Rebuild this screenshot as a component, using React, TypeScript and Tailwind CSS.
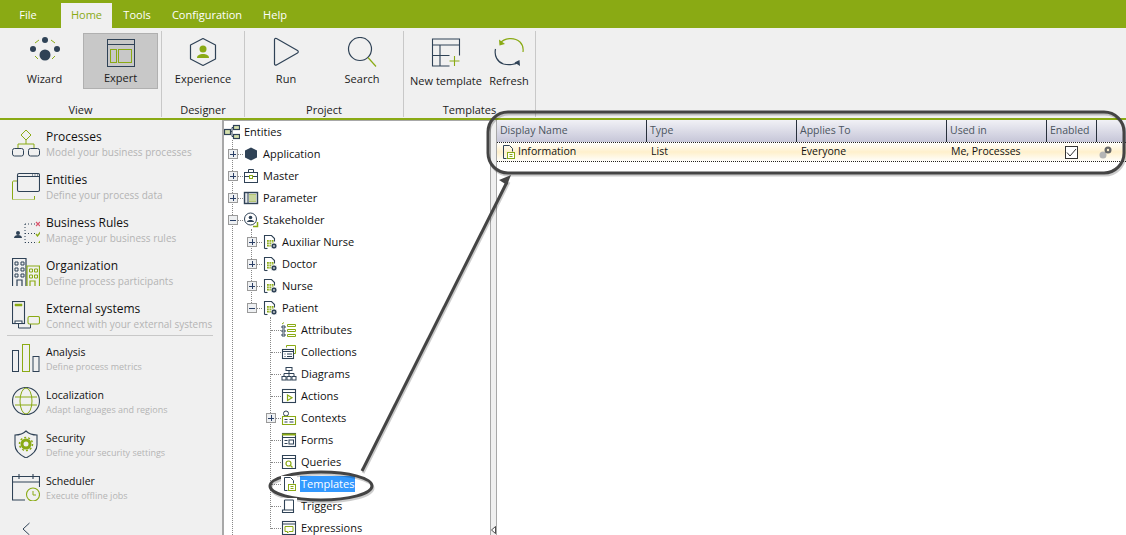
import type { ReactNode } from 'react'

const DARK = '#2f4256'
const GREEN = '#8aaa14'

function Ico({ size, vb, children }: { size: number; vb?: string; children: ReactNode }) {
  return (
    <svg width={size} height={size} viewBox={vb ?? `0 0 ${size} ${size}`} fill="none" stroke={DARK} strokeWidth="1" className="shrink-0">
      {children}
    </svg>
  )
}

/* ---- ribbon icons ---- */
const WizardIcon = () => (
  <Ico size={36}>
    <circle cx="18" cy="6" r="3" fill={DARK} stroke="none" />
    <circle cx="6" cy="15" r="3" fill={DARK} stroke="none" />
    <circle cx="30" cy="15" r="3" fill={DARK} stroke="none" />
    <circle cx="18" cy="21" r="5.5" fill={DARK} stroke="none" />
    <path d="M8 9l4-3M24 6l4 3M8 22l3 3M28 22l-3 3" stroke={GREEN} />
  </Ico>
)
const ExpertIcon = () => (
  <Ico size={30}>
    <rect x="1.500" y="1.500" width="27" height="27" />
    <path d="M1.500 6.500h27" />
    <rect x="4.500" y="11.500" width="6" height="13" stroke={GREEN} />
    <rect x="12.500" y="11.500" width="13" height="13" stroke={GREEN} />
  </Ico>
)
const ExperienceIcon = () => (
  <Ico size={30}>
    <path d="M8 2.500h14l6.500 12.500L22 27.500H8L1.500 15z" strokeWidth="1.200" strokeLinejoin="round" transform="rotate(90 15 15)" />
    <circle cx="15" cy="12" r="3.500" fill={GREEN} stroke="none" />
    <path d="M9 21c0-3 3-4 6-4s6 1 6 4z" fill={GREEN} stroke="none" />
  </Ico>
)
const RunIcon = () => (
  <Ico size={30}>
    <path d="M3.500 2.500c0-1 1-1.500 2-1l21 12c1 .6 1 1.800 0 2.400l-21 12c-1 .5-2 0-2-1z" strokeWidth="1.200" />
  </Ico>
)
const SearchIcon = () => (
  <Ico size={30}>
    <circle cx="13" cy="12" r="11.500" strokeWidth="1.200" />
    <path d="M21 20.500l8 9" stroke={GREEN} strokeWidth="1.200" />
  </Ico>
)
const NewTemplateIcon = () => (
  <Ico size={30}>
    <path d="M28.500 18.500V2H1.500v27h17M1.500 8h27M1.500 18.500h17M9 8v21" strokeWidth="1.100" />
    <path d="M23.500 19v10M18.500 24h10" stroke={GREEN} strokeWidth="1.100" />
  </Ico>
)
const RefreshIcon = () => (
  <Ico size={30}>
    <path d="M6 6.500C10 1 20-.5 26 5c3 3 3.500 6.500 3 10" stroke={GREEN} strokeWidth="1.200" />
    <path d="M5 2.500l.5 6 5.500-1.500z" fill={GREEN} stroke="none" />
    <path d="M1.500 12c-1.500 7 2 13 8 15 5.500 1.500 12 .5 15-2" strokeWidth="1.200" />
    <path d="M26 29l-.5-6-5 2.500z" fill={DARK} stroke="none" />
  </Ico>
)

/* ---- side navigation icons ---- */
const navIcons: Record<string, ReactNode> = {
  Processes: (
    <Ico size={28}>
      <path d="M14 1l5 5-5 5-5-5z" stroke={GREEN} />
      <path d="M14 11v4M6 19v-4h16v4" stroke={GREEN} />
      <rect x="0.500" y="19.500" width="11" height="7.500" rx="2" />
      <rect x="16.500" y="19.500" width="11" height="7.500" rx="2" />
    </Ico>
  ),
  Entities: (
    <Ico size={28}>
      <path d="M5 9H1.500c-.5 0-1 .5-1 1v17c0 .5.5 1 1 1h20c.5 0 1-.5 1-1v-3" stroke={GREEN} />
      <rect x="5.500" y="1.500" width="22" height="18" rx="1.500" strokeWidth="1.100" />
      <path d="M5.500 4.500h22" />
      <path d="M20 3h1M22.500 3h1M25 3h1" />
    </Ico>
  ),
  'Business Rules': (
    <Ico size={28}>
      <circle cx="6" cy="18" r="2" fill={DARK} stroke="none" />
      <path d="M2 23c0-2 2-3 4-3s4 1 4 3z" fill={DARK} stroke="none" />
      <path d="M13 9h11M13 18.500h11M13 27.500h11M13 9v18.500" strokeDasharray="1 2" />
      <path d="M24 7l4 4M28 7l-4 4" stroke="#d9536b" strokeWidth="1.200" />
      <path d="M24 19l1.500 2 3-4M24 28l1.500 2 3-4" stroke={GREEN} strokeWidth="1.300" />
    </Ico>
  ),
  Organization: (
    <Ico size={28}>
      <path d="M.5 28V.5h13.500V28M5 28v-6h5v6" strokeWidth="1.200" />
      <path d="M3 4h3v3H3zM9 4h3v3H9zM3 10h3v3H3zM9 10h3v3H9zM3 16h3v3H3zM9 16h3v3H9z" />
      <path d="M15 28V8h12.500v20M18 28v-5h5v5" stroke={GREEN} strokeWidth="1.200" />
      <path d="M17.500 11h3v3h-3zM22.500 11h3v3h-3zM17.500 17h3v3h-3zM22.500 17h3v3h-3z" stroke={GREEN} />
    </Ico>
  ),
  'External systems': (
    <Ico size={28}>
      <rect x="0.500" y="0.500" width="12" height="22" strokeWidth="1.100" />
      <path d="M3 3h7v2H3z" fill={GREEN} stroke={GREEN} strokeWidth="0.500" />
      <rect x="3" y="20" width="7" height="2.500" fill="#fff" />
      <path d="M6.500 23v4h12v-4" />
      <rect x="16" y="15.500" width="11.500" height="7.500" rx="1.500" stroke={GREEN} strokeWidth="1.100" />
    </Ico>
  ),
  Analysis: (
    <Ico size={28}>
      <rect x="0.500" y="6.500" width="6" height="21" />
      <rect x="10.500" y="0.500" width="7" height="27" stroke={GREEN} />
      <rect x="21" y="12.500" width="6" height="15" />
    </Ico>
  ),
  Localization: (
    <Ico size={28}>
      <circle cx="14" cy="14" r="13.500" strokeWidth="1.100" />
      <ellipse cx="14" cy="14" rx="6" ry="13" stroke={GREEN} />
      <path d="M3 10h22M3 18h22" stroke={GREEN} />
    </Ico>
  ),
  Security: (
    <Ico size={28}>
      <path d="M14 1c3 3 8 4 11 4v10c0 6-5 10-11 13C8 25 3 21 3 15V5c3 0 8-1 11-4z" strokeWidth="1.100" />
      <circle cx="14" cy="14" r="4" stroke={GREEN} strokeWidth="3" />
      <circle cx="14" cy="14" r="6.500" stroke={GREEN} strokeWidth="1.500" strokeDasharray="2 2" />
    </Ico>
  ),
  Scheduler: (
    <Ico size={28}>
      <path d="M13 27H.5V3.500h27V14M.5 9h27M7 1v5M21 1v5" strokeWidth="1.100" />
      <circle cx="21" cy="21.500" r="6.500" stroke={GREEN} strokeWidth="1.100" />
      <path d="M21 18v4h3" stroke={GREEN} />
    </Ico>
  ),
}

/* ---- tree icons ---- */
const Doc = ({ children }: { children?: ReactNode }) => (
  <Ico size={16}>
    <path d="M3.500 14.500v-13h6l3 3v3" />
    <path d="M3.500 14.500h3" />
    {children}
  </Ico>
)
const StakeDoc = () => (
  <Ico size={16}>
    <path d="M2.500 14.500v-13h7l3 3v3" strokeWidth="1.100" />
    <path d="M2.500 14.500h3" strokeWidth="1.100" />
    <rect x="5" y="6" width="6.500" height="6.500" fill={GREEN} stroke="none" />
    <path d="M5 8.200h6.500M5 10.400h6.500M7.200 6v6.500M9.400 6v6.500" stroke="#fff" strokeWidth="0.700" />
    <circle cx="12" cy="12" r="3" fill={DARK} stroke="#fff" strokeWidth="0.700" />
    <circle cx="12" cy="12" r="1" fill="#c8ccd0" stroke="none" />
  </Ico>
)
const TemplateDoc = () => (
  <Doc>
    <rect x="7.500" y="8.500" width="7" height="6" stroke={GREEN} fill="#fff" />
    <path d="M9.500 10.500h3M9.500 12.500h3" stroke={GREEN} />
  </Doc>
)

const treeIcons: Record<string, ReactNode> = {
  Entities: (
    <Ico size={16}>
      <rect x="0.500" y="5.500" width="6" height="5" fill={GREEN} fillOpacity="0.35" strokeWidth="1.200" />
      <rect x="9.500" y="1.500" width="6" height="4" fill={GREEN} fillOpacity="0.35" strokeWidth="1.200" />
      <rect x="9.500" y="10.500" width="6" height="4" fill={GREEN} fillOpacity="0.35" strokeWidth="1.200" />
      <path d="M6.500 7.500h1.500M8 3.500v9M8 3.500h1.500M8 12.500h1.500" />
    </Ico>
  ),
  Application: (
    <Ico size={16}>
      <path d="M8 1.500l6 3v7l-6 3-6-3v-7z" fill={DARK} stroke="none" />
    </Ico>
  ),
  Master: (
    <Ico size={16}>
      <rect x="1.500" y="4.500" width="13" height="10" />
      <path d="M5.500 4.500v-3h5v3M1.500 8.500h13" />
      <rect x="6.500" y="7.500" width="3" height="3" stroke={GREEN} fill="#fff" />
    </Ico>
  ),
  Parameter: (
    <Ico size={16}>
      <rect x="1.500" y="2.500" width="13" height="11" fill="#e4e7ea" strokeWidth="1.400" />
      <path d="M5 3v10" strokeWidth="1" />
      <rect x="6" y="4" width="7" height="8" fill={GREEN} fillOpacity="0.55" stroke="none" />
      <path d="M6 6h7M6 8h7M6 10h7" stroke="#fff" strokeWidth="0.600" />
    </Ico>
  ),
  Stakeholder: (
    <Ico size={16}>
      <path d="M10 14.500h4.500V10" stroke={GREEN} strokeWidth="1.500" />
      <circle cx="7.500" cy="7" r="6" />
      <circle cx="7.500" cy="5.500" r="1.800" fill={DARK} stroke="none" />
      <path d="M4 10c0-1.500 2-2 3.500-2s3.500.5 3.500 2z" fill={DARK} stroke="none" />
    </Ico>
  ),
  Attributes: (
    <Ico size={16}>
      <path d="M1 4h3v2H1zM1 8h3v2H1zM1 12h3v2H1z" />
      <path d="M6.500 2.500h8v2h-8zM6.500 7.500h8v2h-8zM6.500 12.500h8v2h-8z" stroke={GREEN} />
      <path d="M1 2l2-1.500" stroke={GREEN} />
    </Ico>
  ),
  Collections: (
    <Ico size={16}>
      <path d="M5.500 3.500v-2h9v8h-2" stroke={GREEN} />
      <rect x="1.500" y="5.500" width="11" height="9" strokeWidth="1.100" />
      <path d="M1.500 7.500h11M3.500 10h1M6 10h5M3.500 12.500h1M6 12.500h5" />
    </Ico>
  ),
  Diagrams: (
    <Ico size={16}>
      <rect x="5" y="1.500" width="6" height="3" />
      <path d="M8 4.500v3M3 10V7.500h10V10M8 7.500V10" />
      <rect x="1" y="10.500" width="4" height="3.500" />
      <rect x="6" y="10.500" width="4" height="3.500" />
      <rect x="11" y="10.500" width="4" height="3.500" />
    </Ico>
  ),
  Actions: (
    <Ico size={16}>
      <rect x="1.500" y="1.500" width="13" height="13" strokeWidth="1.100" />
      <path d="M1.500 4.500h13" />
      <path d="M6.500 7v5.500L11 9.700z" stroke={GREEN} strokeWidth="1.200" />
    </Ico>
  ),
  Contexts: (
    <Ico size={16}>
      <circle cx="5" cy="3.500" r="2.500" />
      <path d="M1.500 6.500h13v8h-13z" stroke={GREEN} strokeWidth="1.100" />
      <path d="M3.500 9.500h3M8.500 9.500h4M3.500 12h3M8.500 12h4" />
    </Ico>
  ),
  Forms: (
    <Ico size={16}>
      <rect x="1.500" y="1.500" width="13" height="13" strokeWidth="1.100" />
      <path d="M1 2.500h14" stroke={GREEN} strokeWidth="2" />
      <path d="M1.500 5.500h13M3.500 8.500h3M3.500 11.500h3" />
      <rect x="8" y="8" width="4.500" height="4" />
    </Ico>
  ),
  Queries: (
    <Ico size={16}>
      <path d="M1.500 1.500h13v13h-13z" strokeWidth="1.100" />
      <path d="M1.500 4.500h13" />
      <circle cx="7.500" cy="9.500" r="2.500" stroke={GREEN} strokeWidth="1.200" />
      <path d="M9.500 11.500l2 2" stroke={GREEN} strokeWidth="1.200" />
    </Ico>
  ),
  Templates: <TemplateDoc />,
  Triggers: (
    <Ico size={16}>
      <path d="M3.500 2v10h9v2.500H1.500V12h2" strokeWidth="1.100" />
      <path d="M3.500 2h9v10" />
    </Ico>
  ),
  Expressions: (
    <Ico size={16}>
      <rect x="1.500" y="1.500" width="13" height="13" strokeWidth="1.100" />
      <path d="M1.500 4h13" />
      <path d="M4 6.500h8v5H8l-1.500 1.500v-1.500H4z" stroke={GREEN} />
    </Ico>
  ),
}

interface TreeRow {
  label: string
  indent: string
  box?: 'plus' | 'minus'
  leaf?: boolean
  icon?: ReactNode
}

const tree: TreeRow[] = [
  { label: 'Entities', indent: 'pl-0' },
  { label: 'Application', indent: 'pl-[4px]', box: 'plus' },
  { label: 'Master', indent: 'pl-[4px]', box: 'plus' },
  { label: 'Parameter', indent: 'pl-[4px]', box: 'plus' },
  { label: 'Stakeholder', indent: 'pl-[4px]', box: 'minus' },
  { label: 'Auxiliar Nurse', indent: 'pl-[23px]', box: 'plus', icon: <StakeDoc /> },
  { label: 'Doctor', indent: 'pl-[23px]', box: 'plus', icon: <StakeDoc /> },
  { label: 'Nurse', indent: 'pl-[23px]', box: 'plus', icon: <StakeDoc /> },
  { label: 'Patient', indent: 'pl-[23px]', box: 'minus', icon: <StakeDoc /> },
  { label: 'Attributes', indent: 'pl-[42px]', leaf: true },
  { label: 'Collections', indent: 'pl-[42px]', leaf: true },
  { label: 'Diagrams', indent: 'pl-[42px]', leaf: true },
  { label: 'Actions', indent: 'pl-[42px]', leaf: true },
  { label: 'Contexts', indent: 'pl-[42px]', box: 'plus' },
  { label: 'Forms', indent: 'pl-[42px]', leaf: true },
  { label: 'Queries', indent: 'pl-[42px]', leaf: true },
  { label: 'Templates', indent: 'pl-[42px]', leaf: true },
  { label: 'Triggers', indent: 'pl-[42px]', leaf: true },
  { label: 'Expressions', indent: 'pl-[42px]', leaf: true },
]

const navTop = [
  { title: 'Processes', desc: 'Model your business processes' },
  { title: 'Entities', desc: 'Define your process data' },
  { title: 'Business Rules', desc: 'Manage your business rules' },
  { title: 'Organization', desc: 'Define process participants' },
  { title: 'External systems', desc: 'Connect with your external systems' },
]
const navBottom = [
  { title: 'Analysis', desc: 'Define process metrics' },
  { title: 'Localization', desc: 'Adapt languages and regions' },
  { title: 'Security', desc: 'Define your security settings' },
  { title: 'Scheduler', desc: 'Execute offline jobs' },
]

const columns = [
  { name: 'Display Name', w: 'w-[150px]' },
  { name: 'Type', w: 'w-[150px]' },
  { name: 'Applies To', w: 'w-[150px]' },
  { name: 'Used in', w: 'w-[100px]' },
  { name: 'Enabled', w: 'w-[50px]' },
]

function RibbonButton({ icon, label, width, active, low }: { icon: ReactNode; label: string; width: string; active?: boolean; low?: boolean }) {
  return (
    <div className={`flex h-[56px] flex-col items-center justify-between ${low ? 'pb-[1px]' : 'pb-[3px]'} ${width} ${active ? 'border border-[#b0b0b0] bg-[#c8c8c8]' : ''}`}>
      <div className="flex h-[38px] items-center">{icon}</div>
      <span className="whitespace-nowrap text-[11px] leading-[14px] text-[#1c1c1c]">{label}</span>
    </div>
  )
}

function RibbonGroup({ label, width, children }: { label: string; width: string; children: ReactNode }) {
  return (
    <div className={`flex h-[86px] flex-col justify-between border-r border-[#c8c8c8] ${width}`}>
      <div className="flex items-start justify-start">{children}</div>
      <div className="text-center text-[11px] leading-[14px] text-[#1c1c1c]">{label}</div>
    </div>
  )
}

function NavItem({ title, desc, small, height }: { title: string; desc: string; small?: boolean; height: string }) {
  return (
    <div className={`flex gap-[6px] pl-[12px] ${height}`}>
      <div className="w-[28px] shrink-0">{navIcons[title]}</div>
      <div className="min-w-0">
        <div className={`whitespace-nowrap leading-[16px] text-[#111] ${small ? 'text-[10.5px]' : 'text-[12px]'}`}>{title}</div>
        <div className={`-mt-px whitespace-nowrap leading-[16px] text-[#b4b4b4] ${small ? 'text-[9px]' : 'text-[10px]'}`}>{desc}</div>
      </div>
    </div>
  )
}

function TreeItem({ row }: { row: TreeRow }) {
  return (
    <div className={`flex h-[22px] items-center ${row.indent}`}>
      {row.box && (
        <span className="relative z-10 flex h-[10px] w-[10px] shrink-0 items-center justify-center border border-[#9a9a9a] bg-[#eef0f2]">
          <span className="h-px w-[6px] bg-[#2a3f66]" />
          {row.box === 'plus' && <span className="absolute h-[6px] w-px bg-[#2a3f66]" />}
        </span>
      )}
      {row.leaf && <span className="w-[5px] shrink-0" />}
      {row.leaf ? (
        <span className="h-0 w-[10px] shrink-0 border-t border-dotted border-[#888]" />
      ) : row.box ? (
        <span className="h-0 w-[5px] shrink-0 border-t border-dotted border-[#888]" />
      ) : null}
      <span className="relative z-10 bg-white">{row.icon ?? treeIcons[row.label]}</span>
      <span
        className={`ml-[3px] whitespace-nowrap px-[1px] text-[11px] leading-[16px] ${
          row.label === 'Templates' ? 'bg-[#3399ff] text-white' : 'text-[#111]'
        }`}
      >
        {row.label}
      </span>
    </div>
  )
}

export default function App() {
  return (
    <div className="relative h-[535px] w-[1126px] overflow-hidden bg-white font-['Open_Sans','Noto_Sans',sans-serif]">
      {/* Menu */}
      <div className="flex h-[28px] items-end bg-[#8aaa14] text-[11px] text-white">
        <div className="flex h-[25px] w-[61px] items-center justify-center pr-[5px]">File</div>
        <div className="flex h-[25px] w-[51px] items-center justify-center bg-[#f0f0f0] text-[#8aaa14]">Home</div>
        <div className="flex h-[25px] w-[50px] items-center justify-center">Tools</div>
        <div className="flex h-[25px] w-[90px] items-center justify-center">Configuration</div>
        <div className="flex h-[25px] w-[46px] items-center justify-center">Help</div>
      </div>

      {/* Ribbon */}
      <div className="flex h-[92px] items-start border-b-2 border-[#8aaa14] bg-[#f0f0f0] pt-[3px]">
        <RibbonGroup label="View" width="w-[162px]">
          <div className="flex items-start pt-[2px]">
            <RibbonButton icon={<WizardIcon />} label="Wizard" width="w-[83px] pl-[6px]" />
            <RibbonButton icon={<ExpertIcon />} label="Expert" width="w-[75px]" active />
          </div>
        </RibbonGroup>
        <RibbonGroup label="Designer" width="w-[83px]">
          <div className="pt-[2px]">
            <RibbonButton icon={<ExperienceIcon />} label="Experience" width="w-[82px]" />
          </div>
        </RibbonGroup>
        <RibbonGroup label="Project" width="w-[159px]">
          <div className="flex pt-[2px]">
            <RibbonButton icon={<RunIcon />} label="Run" width="w-[82px]" />
            <RibbonButton icon={<SearchIcon />} label="Search" width="w-[70px]" />
          </div>
        </RibbonGroup>
        <RibbonGroup label="Templates" width="w-[132px]">
          <div className="flex pl-[2px] pt-[2px]">
            <RibbonButton icon={<NewTemplateIcon />} label="New template" width="w-[80px]" low />
            <RibbonButton icon={<RefreshIcon />} label="Refresh" width="w-[46px]" low />
          </div>
        </RibbonGroup>
      </div>

      {/* Body */}
      <div className="flex h-[415px]">
        <aside className="w-[222px] shrink-0 bg-[#f0f0f0] pt-[9px]">
          {navTop.map((n, i) => (
            <NavItem key={n.title} {...n} height={i === 4 ? 'h-[34px]' : 'h-[43px]'} />
          ))}
          <div className="mb-[8px] ml-[7px] mr-[9px] h-px bg-[#c8c8c8]" />
          {navBottom.map((n) => (
            <NavItem key={n.title} {...n} small height="h-[43px]" />
          ))}
          <svg width="10" height="14" viewBox="0 0 10 14" fill="none" stroke={DARK} className="ml-[21px] mt-[6px]">
            <path d="M8.500 1L2 7l6.500 6" />
          </svg>
        </aside>

        <div className="relative w-[268px] shrink-0 border-l-2 border-t border-[#a8a8a8]">
          {/* Tree guides */}
          <span className="absolute left-[8px] top-[18px] h-[400px] border-l border-dotted border-[#888]" />
          <span className="absolute left-[27px] top-[108px] h-[76px] border-l border-dotted border-[#888]" />
          <span className="absolute left-[46px] top-[196px] h-[212px] border-l border-dotted border-[#888]" />
          {tree.map((row) => (
            <TreeItem key={row.label} row={row} />
          ))}
        </div>

        <div className="relative w-[7px] shrink-0 border-x border-[#a8a8a8] bg-[#f0f0f0]">
          <svg width="5" height="8" viewBox="0 0 5 8" className="absolute bottom-[1px] left-0">
            <path d="M4.500 .5v7L.5 4z" fill="#fff" stroke="#222" strokeWidth="0.800" />
          </svg>
        </div>

        {/* Grid */}
        <div className="min-w-0 flex-1 text-[10.5px]">
          <div className="flex h-[22px] bg-gradient-to-b from-[#f1f1f6] to-[#c6c6d8] text-[#4b5560]">
            {columns.map((c) => (
              <div key={c.name} className={`flex items-center border-r border-[#28303c] pl-[3px] ${c.w}`}>
                {c.name}
              </div>
            ))}
          </div>
          <div className="flex h-[20px] items-center border-y border-dotted border-[#222] bg-gradient-to-b from-[#fffefa] via-[#fff0cc] to-[#fffefa] text-[#111]">
            <div className="flex w-[150px] items-center gap-[2px] pl-[3px]">
              <TemplateDoc />
              <span>Information</span>
            </div>
            <div className="w-[150px] pl-[4px]">List</div>
            <div className="w-[150px] pl-[4px]">Everyone</div>
            <div className="w-[100px] pl-[4px]">Me, Processes</div>
            <div className="flex w-[50px] justify-center pr-[2px]">
              <span className="flex h-[13px] w-[13px] items-center justify-center border border-[#333] bg-white">
                <svg width="11" height="11" viewBox="0 0 11 11" fill="none" stroke="#333">
                  <path d="M1 5.500l3 3.500 6-7" />
                </svg>
              </span>
            </div>
            <div className="flex flex-1 justify-end pr-[14px]">
              <svg width="13" height="13" viewBox="0 0 13 13">
                <circle cx="4" cy="9" r="3.500" fill="#b5b5b5" />
                <circle cx="9" cy="4" r="3.500" fill="#666" />
                <circle cx="9" cy="4" r="1.200" fill="#fff0cc" />
              </svg>
            </div>
          </div>
        </div>
      </div>

      {/* Callouts drawn over the screenshot */}
      <svg width="1126" height="535" viewBox="0 0 1126 535" fill="none" className="pointer-events-none absolute left-0 top-0">
        <g stroke="#000" strokeOpacity="0.2" strokeWidth="3" transform="translate(1 2)">
          <rect x="488" y="112" width="636" height="61" rx="20" />
          <ellipse cx="321" cy="486" rx="51" ry="14" />
          <path d="M362 471L508 180" />
        </g>
        <rect x="488" y="112" width="636" height="61" rx="20" stroke="#444" strokeWidth="3" />
        <ellipse cx="321" cy="486" rx="51" ry="14" stroke="#444" strokeWidth="3" />
        <path d="M362 471L507 182" stroke="#444" strokeWidth="3" />
        <path d="M511 175l-12 5 8 5z" fill="#444" />
      </svg>
    </div>
  )
}
